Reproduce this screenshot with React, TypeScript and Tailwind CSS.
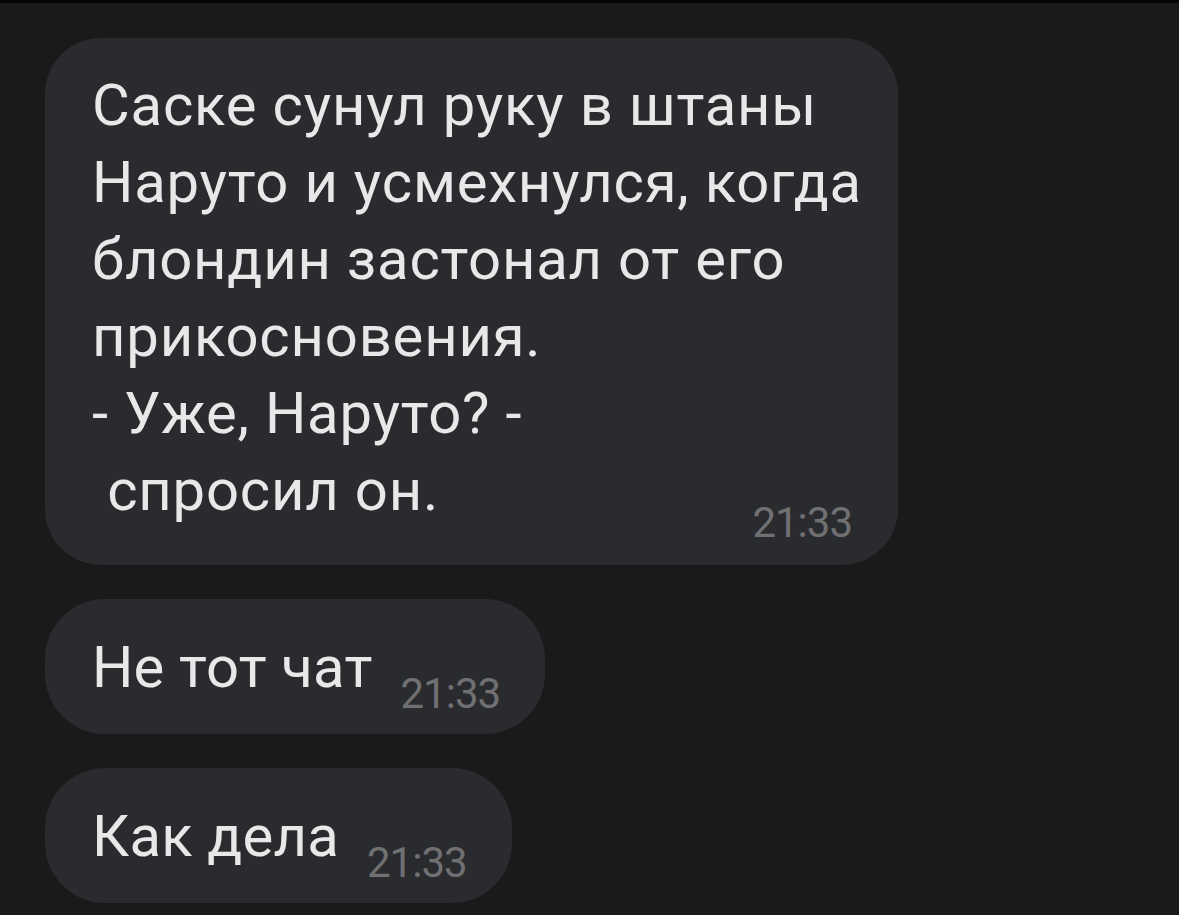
import React from 'react';

interface Message {
  lines: string[];
  time: string;
}

const first: Message = {
  lines: [
    'Саске сунул руку в штаны',
    'Наруто и усмехнулся, когда',
    'блондин застонал от его',
    'прикосновения.',
    '- Уже, Наруто? -',
    ' спросил он.',
  ],
  time: '21:33',
};

const short: Message[] = [
  { lines: ['Не тот чат'], time: '21:33' },
  { lines: ['Как дела'], time: '21:33' },
];

const App: React.FC = () => {
  return (
    <div className="w-[1179px] h-[915px] bg-[#1a1a1b] overflow-hidden font-['Roboto',sans-serif]">
      <div className="h-[3px] bg-[#050505]"></div>

      <div className="flex flex-col items-start gap-[34px] pl-[45px] pt-[35px]">
        {/* long message */}
        <div className="w-[853px] h-[527px] flex items-end bg-[#2a2b2e] rounded-[56px] pl-[47px] pr-[46px] pt-[29px] pb-[21px]">
          <div className="flex-1 min-w-0 self-start text-[58px] leading-[77px] tracking-[0.8px] text-[#e8e8e8] whitespace-pre">
            {first.lines.map((line, i) => (
              <div key={i}>{line}</div>
            ))}
          </div>
          <span className="shrink-0 text-[42px] leading-none tracking-[-1px] text-[#707073]">{first.time}</span>
        </div>

        {/* short ones */}
        {short.map((m, i) => (
          <div
            key={i}
            className="h-[135px] flex items-start gap-[28px] bg-[#2a2b2e] rounded-[60px] pl-[47px] pr-[45px] pt-[30px]"
          >
            <span className="text-[58px] leading-[77px] tracking-[0.2px] text-[#e8e8e8] whitespace-pre">{m.lines[0]}</span>
            <span className="mt-[44px] text-[42px] leading-none tracking-[-1px] text-[#707073]">{m.time}</span>
          </div>
        ))}
      </div>
    </div>
  );
};

export default App;
